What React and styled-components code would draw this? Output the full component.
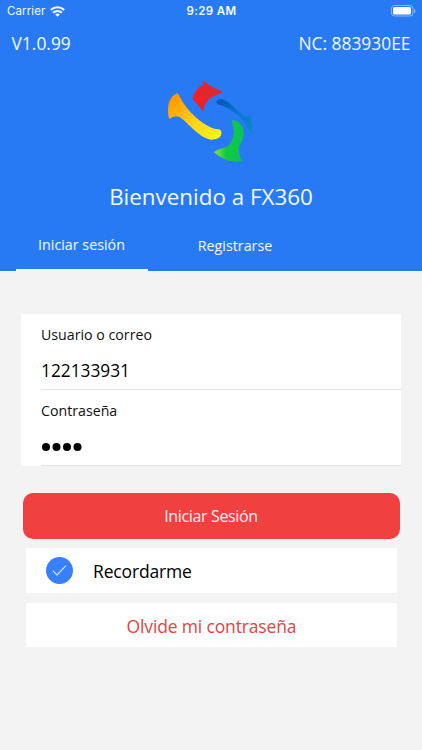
import React, { useState } from "react";
import styled, { createGlobalStyle, ThemeProvider } from "styled-components";

const theme = {
  primary: "#287af4",
  accent: "#387ffb",
  danger: "#f04040",
  background: "#f3f3f3",
  line: "#e2e2e2",
  font: '"Open Sans", "Noto Sans", sans-serif',
};

const GlobalStyle = createGlobalStyle`
  *, *::before, *::after {
    box-sizing: border-box;
  }

  body {
    margin: 0;
    background-color: #f3f3f3;
  }
`;

const StyledWrapper = styled.div`
  width: 422px;
  height: 750px;
  overflow: hidden;
  background-color: ${({ theme }) => theme.background};
  font-family: ${({ theme }) => theme.font};
`;

const StyledHeader = styled.header`
  display: flex;
  flex-direction: column;
  height: 271px;
  background-color: ${({ theme }) => theme.primary};
  color: #f3faff;
`;

const StyledStatusBar = styled.div`
  display: grid;
  grid-template-columns: 1fr auto 1fr;
  align-items: center;
  height: 22px;
  padding: 0 6px 0 7px;
  font-family: Inter, "Liberation Sans", sans-serif;
  font-size: 11.5px;
  line-height: 22px;
`;

const StyledCarrier = styled.div`
  display: flex;
  align-items: center;
  gap: 5px;
  letter-spacing: 0.1px;
`;

const StyledTime = styled.span`
  font-weight: 600;
  letter-spacing: 0.4px;
`;

const StyledBattery = styled.svg`
  justify-self: end;
`;

const StyledInfo = styled.div`
  display: flex;
  justify-content: space-between;
  height: 44px;
  padding: 0 11.5px 0 11.5px;
  font-size: 17.4px;
  line-height: 42px;
`;

const StyledLogo = styled.svg`
  flex: none;
  margin: 4px 0 0 160px;
`;

const StyledHeading = styled.h1`
  height: 54px;
  margin: 0;
  font-size: 22.4px;
  font-weight: 400;
  line-height: 54px;
  text-align: center;
`;

const StyledTabs = styled.nav`
  display: flex;
  gap: 21px;
  height: 47px;
  padding-left: 16px;
`;

const StyledTab = styled.button`
  width: 132px;
  padding: ${({ $active }) => ($active ? "0 1px 5px 0" : "0 0 3px")};
  border: 0;
  border-bottom: 2px solid ${({ $active }) => ($active ? "#fff" : "transparent")};
  background: none;
  color: inherit;
  font-family: inherit;
  font-size: 14.3px;
`;

const StyledForm = styled.form`
  display: flex;
  flex-direction: column;
  padding: 43px 21px 0;
`;

const StyledCard = styled.div`
  width: 380px;
  padding-left: 20px;
  background-color: #fff;
`;

const StyledField = styled.label`
  display: block;
  height: 76px;
  padding-top: 11px;
  border-bottom: 1px solid ${({ theme }) => theme.line};
  color: #111;
  font-size: 14.2px;
  line-height: 20px;
`;

const StyledInput = styled.input`
  display: block;
  width: 100%;
  height: 30px;
  margin-top: 10px;
  padding: 0;
  border: 0;
  outline: 0;
  background: none;
  color: #000;
  font-family: inherit;
  font-size: 17.3px;
`;

const StyledDots = styled.svg`
  display: block;
  margin-top: 21px;
`;

const StyledSubmit = styled.button`
  width: 377px;
  height: 46px;
  margin: 27px 0 9px 1.5px;
  padding: 0;
  border: 0;
  border-radius: 10px;
  background-color: ${({ theme }) => theme.danger};
  color: #fff2f2;
  font-family: inherit;
  font-size: 16px;
  letter-spacing: -0.35px;
`;

const StyledRow = styled.button`
  display: flex;
  align-items: center;
  justify-content: ${({ $centered }) => ($centered ? "center" : "flex-start")};
  gap: 20px;
  width: 371px;
  height: 44.5px;
  margin: 0 0 10px 4.5px;
  padding: ${({ $centered }) => ($centered ? "2px 0 0 1px" : "0 0 0 20.5px")};
  border: 0;
  background-color: #fff;
  color: ${({ $centered }) => ($centered ? "#e04444" : "#000")};
  font-family: inherit;
  font-size: 17.5px;
  letter-spacing: -0.15px;
`;

const StyledRowLabel = styled.span`
  padding-top: 2px;
`;

const StyledCheck = styled.span`
  display: flex;
  align-items: center;
  justify-content: center;
  width: 27px;
  height: 27px;
  border-radius: 50%;
  background-color: ${({ theme }) => theme.accent};
`;

const WifiIcon = () => (
  <svg width="15" height="11" viewBox="0 0 15 11" fill="none" stroke="#f3faff" strokeWidth="2.2">
    <path d="M0.8 4C4.6 .3 10.4 .3 14.2 4" />
    <path d="M3.1 6.8C5.7 4.4 9.3 4.4 11.9 6.8" />
    <path d="M5.2 8.5Q7.5 6.7 9.8 8.5L7.5 10.8Z" fill="#f3faff" stroke="none" />
  </svg>
);

const BatteryIcon = () => (
  <StyledBattery width="25" height="12" viewBox="0 0 25 12">
    <rect x="0.5" y="0.5" width="21.5" height="10.5" rx="3" fill="none" stroke="#8db9fa" />
    <rect x="2" y="2" width="18" height="7.5" rx="1.5" fill="#fff" />
    <path d="M23.2 4v4q1.3-.7 1.3-2t-1.3-2" fill="#8db9fa" />
  </StyledBattery>
);

const Logo = () => (
  <StyledLogo width="100" height="100" viewBox="0 0 300 300">
    <defs>
      <linearGradient id="gold" x1="0" y1="0" x2="1" y2="1">
        <stop offset="0.1" stopColor="#ff9800" />
        <stop offset="0.55" stopColor="#ffd21c" />
        <stop offset="1" stopColor="#f6fa1c" />
      </linearGradient>
      <linearGradient id="red" x1="0" y1="0" x2="1" y2="0">
        <stop offset="0" stopColor="#f21f24" />
        <stop offset="1" stopColor="#d22d38" />
      </linearGradient>
      <linearGradient id="blue" x1="0" y1="0" x2="1" y2="1">
        <stop offset="0" stopColor="#0050b4" />
        <stop offset="0.5" stopColor="#0878d0" />
        <stop offset="1" stopColor="#078ac4" />
      </linearGradient>
      <linearGradient id="green" x1="0" y1="0" x2="1" y2="0">
        <stop offset="0" stopColor="#8ee33c" />
        <stop offset="0.4" stopColor="#12c943" />
        <stop offset="1" stopColor="#0ac25b" />
      </linearGradient>
    </defs>
    <path
      d="M53 70C36 75 24 93 24 119C24 130 25 140 28 147Q40 136 56 140C70 146 81 160 96 174C114 191 132 205 152 209Q176 210 183 196Q188 182 176 178C158 177 144 169 128 158C103 140 80 116 66 92Q57 76 53 70Z"
      fill="url(#gold)"
    />
    <path
      d="M129 33C137 37 144 43 153 48C166 56 178 60 189 66C174 76 156 78 145 90C134 101 132 113 130 125C120 111 110 102 98 87C101 69 112 52 130 45Q131 39 126 33Z"
      fill="url(#red)"
    />
    <path
      d="M178 87Q168 90 170 99Q172 104 181 105C199 111 217 122 233 135C248 148 255 158 258 167C264 176 270 184 274 193C279 177 277 155 269 135Q258 144 246 133C228 117 210 96 189 89Q183 86 178 87Z"
      fill="url(#blue)"
    />
    <path
      d="M217 150C235 150 248 165 251 183C254 201 244 215 238 232C234 247 239 260 247 274C219 278 188 271 162 247C173 237 187 236 199 231C214 224 219 205 222 187C222 174 214 161 217 150Z"
      fill="url(#green)"
    />
  </StyledLogo>
);

const App = () => {
  const [activeTab, setActiveTab] = useState("login");
  const [user, setUser] = useState("122133931");
  const [isRemembered, setRemembered] = useState(true);

  return (
    <ThemeProvider theme={theme}>
      <GlobalStyle />
      <StyledWrapper>
        <StyledHeader>
          <StyledStatusBar>
            <StyledCarrier>
              Carrier
              <WifiIcon />
            </StyledCarrier>
            <StyledTime>9:29 AM</StyledTime>
            <BatteryIcon />
          </StyledStatusBar>
          <StyledInfo>
            <span>V1.0.99</span>
            <span>NC: 883930EE</span>
          </StyledInfo>
          <Logo />
          <StyledHeading>Bienvenido a FX360</StyledHeading>
          <StyledTabs>
            <StyledTab $active={activeTab === "login"} onClick={() => setActiveTab("login")}>
              Iniciar sesión
            </StyledTab>
            <StyledTab $active={activeTab === "register"} onClick={() => setActiveTab("register")}>
              Registrarse
            </StyledTab>
          </StyledTabs>
        </StyledHeader>
        <StyledForm onSubmit={(e) => e.preventDefault()}>
          <StyledCard>
            <StyledField>
              Usuario o correo
              <StyledInput value={user} onChange={(e) => setUser(e.target.value)} />
            </StyledField>
            <StyledField>
              Contraseña
              <StyledDots width="50" height="10" viewBox="0 0 50 10">
                {[5, 15.5, 26, 36.5].map((cx) => (
                  <circle key={cx} cx={cx} cy="5" r="4" />
                ))}
              </StyledDots>
            </StyledField>
          </StyledCard>
          <StyledSubmit>Iniciar Sesión</StyledSubmit>
          <StyledRow type="button" onClick={() => setRemembered(!isRemembered)}>
            <StyledCheck>
              {isRemembered && (
                <svg width="15" height="13" viewBox="0 0 15 13" fill="none" stroke="#dceaff">
                  <path d="M1 6.8L5 11L14 1.6" strokeWidth="1.1" />
                </svg>
              )}
            </StyledCheck>
            <StyledRowLabel>Recordarme</StyledRowLabel>
          </StyledRow>
          <StyledRow type="button" $centered>
            Olvide mi contraseña
          </StyledRow>
        </StyledForm>
      </StyledWrapper>
    </ThemeProvider>
  );
};

export default App;
